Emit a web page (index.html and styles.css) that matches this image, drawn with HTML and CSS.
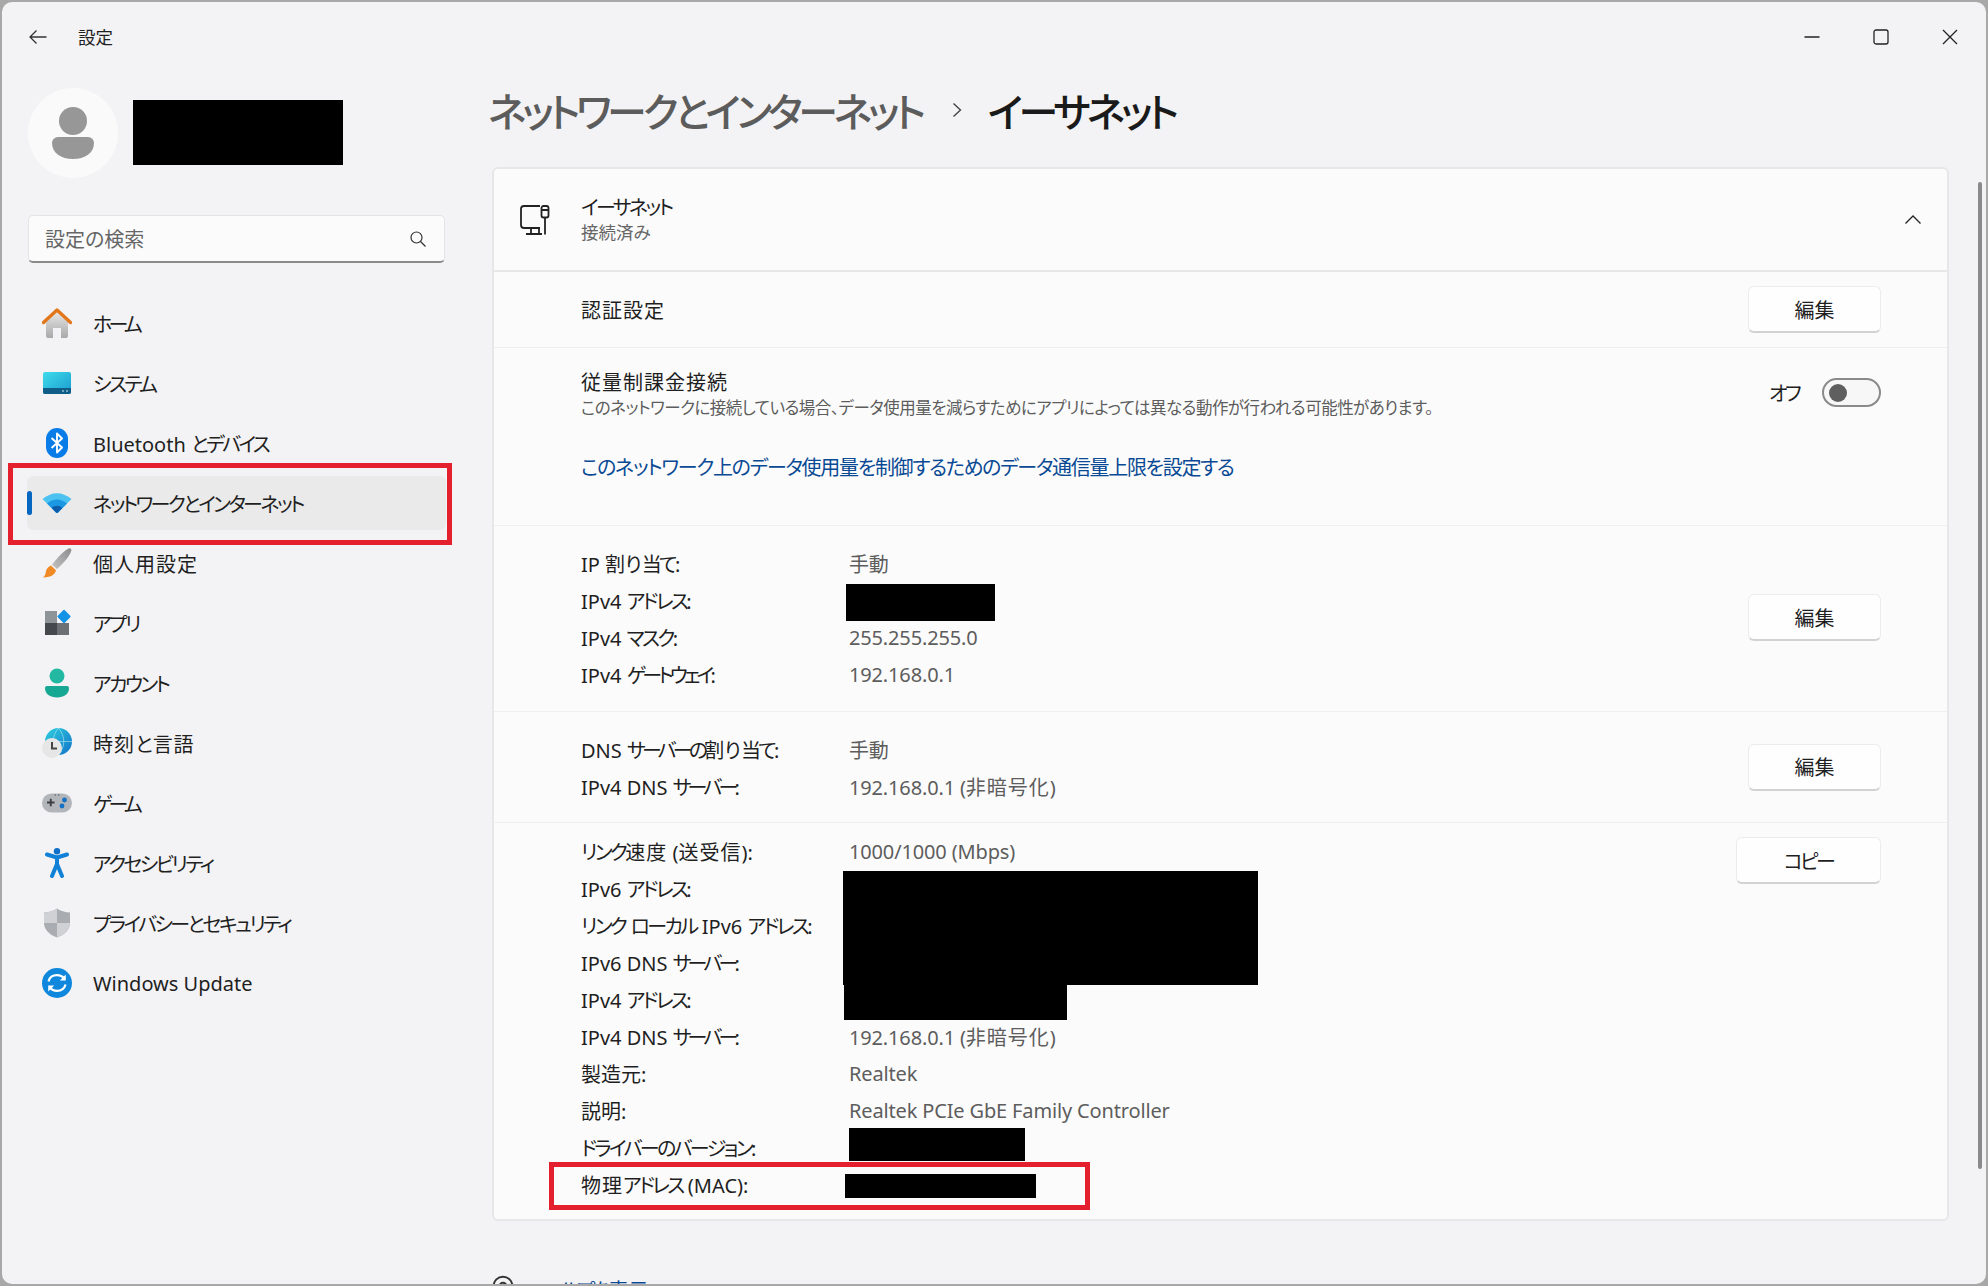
FILE: index.html
```html
<!DOCTYPE html>
<html lang="ja">
<head>
  <meta charset="UTF-8" />
  <meta name="viewport" content="width=device-width, initial-scale=1.0" />
  <title>設定</title>
  <link rel="stylesheet" href="styles.css">
</head>
<body>
  <div class="window">
    <header class="titlebar">
      <svg class="back" viewBox="0 0 18 16"><path d="M17.5 8H1M7.5 1.5 1 8l6.500 6.500" /></svg>
      <span class="app-name">設定</span>
      <div class="win-controls">
        <svg viewBox="0 0 16 16"><path d="M0.500 8h15" /></svg>
        <svg viewBox="0 0 16 16"><rect x="1" y="1" width="14" height="14" rx="2" /></svg>
        <svg viewBox="0 0 16 16"><path d="M1 1l14 14M15 1 1 15" /></svg>
      </div>
    </header>

    <div class="content">
      <aside class="sidebar">
        <div class="profile">
          <div class="avatar">
            <svg viewBox="0 0 90 90"><circle cx="45" cy="33" r="14" /><path d="M24 55a6 6 0 0 1 6-6h30a6 6 0 0 1 6 6c0 10-9 16-21 16s-21-6-21-16z" /></svg>
          </div>
          <div class="profile-name"></div>
        </div>

        <div class="search">
          <span>設定の検索</span>
          <svg viewBox="0 0 16 16"><circle cx="6.500" cy="6.500" r="5.500" /><path d="M10.500 10.500 15.500 15.500" /></svg>
        </div>

        <nav class="nav">
          <a class="nav-item" href="#">
            <svg class="nav-icon" viewBox="0 0 30 30">
              <defs><linearGradient id="home" x1="0" y1="0" x2="0" y2="1"><stop offset="0" stop-color="#e6e6e6" /><stop offset="1" stop-color="#a9a9a9" /></linearGradient></defs>
              <path d="M4 14 15 4l11 10v14a2 2 0 0 1-2 2h-5V20h-8v10H6a2 2 0 0 1-2-2z" fill="url(#home)" />
              <path d="M1.500 14.500 15 2l13.500 12.500" fill="none" stroke="#e2761a" stroke-width="3.400" stroke-linecap="round" stroke-linejoin="round" />
            </svg>
            <span class="kk">ホーム</span>
          </a>
          <a class="nav-item" href="#">
            <svg class="nav-icon" viewBox="0 0 30 30">
              <defs><linearGradient id="sys" x1="0" y1="0" x2="1" y2="1"><stop offset="0" stop-color="#3fdcea" /><stop offset="1" stop-color="#1a9ad0" /></linearGradient></defs>
              <rect x="1" y="4" width="28" height="22" rx="2" fill="url(#sys)" />
              <path d="M1 20h28v4a2 2 0 0 1-2 2H3a2 2 0 0 1-2-2z" fill="#0f5c86" />
              <path d="M20 23h2M24 23h2" stroke="#cfeaf5" stroke-width="1.200" />
            </svg>
            <span class="k">システム</span>
          </a>
          <a class="nav-item" href="#">
            <svg class="nav-icon" viewBox="0 0 30 30">
              <rect x="4" y="0" width="22" height="30" rx="11" fill="#0a7ce8" />
              <path d="M9.500 10 20 19.500 15 24.500V5.500l5 5L9.500 20" fill="none" stroke="#fff" stroke-width="1.900" stroke-linejoin="round" />
            </svg>
            <span>Bluetooth <span class="k">とデバイス</span></span>
          </a>
          <a class="nav-item nav-item-active" href="#">
            <svg class="nav-icon" viewBox="0 0 30 30">
              <path d="M0.500 11Q15-.5 29.500 11L16 24.500a1.500 1.500 0 0 1-2 0z" fill="#4cc2f1" />
              <path d="M5 15.500Q15 7.500 25 15.500L16 24.500a1.500 1.500 0 0 1-2 0z" fill="#1c97e2" />
              <path d="M9.500 19.800Q15 15.500 20.500 19.800L16 24.500a1.500 1.500 0 0 1-2 0z" fill="#0c5cab" />
            </svg>
            <span class="k">ネットワークとインターネット</span>
          </a>
          <a class="nav-item" href="#">
            <svg class="nav-icon" viewBox="0 0 30 30">
              <defs><linearGradient id="brush" x1="1" y1="0" x2="0" y2="1"><stop offset="0" stop-color="#8b8b8b" /><stop offset="1" stop-color="#c4c4c4" /></linearGradient></defs>
              <path d="M26.500.5c2-.8 3.200.4 2.800 2.300C27 10 20 16.500 15 21l-5-4.500C14.500 11 20 4 26.500.5z" fill="url(#brush)" />
              <path d="M9 17.500l5 4.700c-1 4-4 7-13 7.300 2.500-2 2.500-4 3-6.500.5-2.500 2.500-4.500 5-5.500z" fill="#f08a24" />
            </svg>
            <span class="w">個人用設定</span>
          </a>
          <a class="nav-item" href="#">
            <svg class="nav-icon" viewBox="0 0 30 30">
              <rect x="3" y="3" width="12" height="12" fill="#8f9499" />
              <rect x="3" y="15" width="12" height="12" fill="#45494d" />
              <rect x="15" y="15" width="12" height="12" fill="#6c7075" />
              <rect x="17" y="3.500" width="10" height="10" rx="1.200" transform="rotate(45 22 8.500)" fill="#1492e6" />
            </svg>
            <span class="k">アプリ</span>
          </a>
          <a class="nav-item" href="#">
            <svg class="nav-icon" viewBox="0 0 30 30">
              <circle cx="15" cy="8" r="7.500" fill="#22b8a2" />
              <path d="M3 20a2 2 0 0 1 2-2h20a2 2 0 0 1 2 2c0 6-5 9.500-12 9.500S3 26 3 20z" fill="#17a893" />
            </svg>
            <span class="k">アカウント</span>
          </a>
          <a class="nav-item" href="#">
            <svg class="nav-icon" viewBox="0 0 30 30">
              <defs><linearGradient id="globe" x1="0" y1="0" x2="1" y2="1"><stop offset="0" stop-color="#2fd0de" /><stop offset="1" stop-color="#1272c9" /></linearGradient></defs>
              <circle cx="16.500" cy="13.500" r="13.500" fill="url(#globe)" />
              <path d="M3 13.500h27M16.500 0c-7 8-7 19 0 27M16.500 0c7 8 7 19 0 27" fill="none" stroke="#bfeef5" stroke-width=".8" opacity=".7" />
              <circle cx="10" cy="20" r="10" fill="#e6e6e6" />
              <path d="M10 14v6.500h5" fill="none" stroke="#444" stroke-width="2" />
            </svg>
            <span><span class="w">時刻</span>と<span class="w">言語</span></span>
          </a>
          <a class="nav-item" href="#">
            <svg class="nav-icon" viewBox="0 0 30 30">
              <rect x="0" y="5.500" width="30" height="19" rx="9.500" fill="#b2b5ba" />
              <path d="M5 14.500h7.500M8.750 10.800v7.500" stroke="#3d3f42" stroke-width="1.900" />
              <circle cx="22.500" cy="12" r="2.400" fill="#1670c4" />
              <circle cx="20" cy="18" r="2.400" fill="#1670c4" />
              <path d="M12.500 7h1.500M16 7h1.500" stroke="#555" stroke-width="1" />
            </svg>
            <span class="kk">ゲーム</span>
          </a>
          <a class="nav-item" href="#">
            <svg class="nav-icon" viewBox="0 0 30 30">
              <circle cx="15" cy="3.300" r="3.200" fill="#0f6fc6" />
              <path d="M5 6.500 15 9.500l10-3M15 9.500v8M15 16l-5 12M15 16l5 12" fill="none" stroke="#1181d8" stroke-width="4" stroke-linecap="round" stroke-linejoin="round" />
            </svg>
            <span class="k">アクセシビリティ</span>
          </a>
          <a class="nav-item" href="#">
            <svg class="nav-icon" viewBox="0 0 30 30">
              <path d="M15 .5c3.500 2.500 8 3.800 13 4v10c0 7-5 12-13 15C7 26.500 2 21.500 2 14.500v-10C7 4.300 11.500 3 15 .5z" fill="#a9acb0" />
              <path d="M15 .5v14.500H2v-.5v-10C7 4.300 11.500 3 15 .5zM15 15h13c-.5 6.500-5.500 11.500-13 14.500z" fill="#cfd1d4" />
            </svg>
            <span class="k">プライバシーとセキュリティ</span>
          </a>
          <a class="nav-item" href="#">
            <svg class="nav-icon" viewBox="0 0 30 30">
              <circle cx="15" cy="15" r="15" fill="#0f87dc" />
              <path d="M6.500 13.500C7.500 9.500 11 7.200 15 7.200c3 0 5.500 1.200 7 3.300M23.500 16.500c-1 4-4.500 6.300-8.500 6.300-3 0-5.500-1.200-7-3.300" fill="none" stroke="#fff" stroke-width="2.200" />
              <path d="M23.800 6.500v6h-6zM6.200 23.500v-6h6z" fill="#fff" />
            </svg>
            <span>Windows Update</span>
          </a>
        </nav>
      </aside>

      <main class="main">
        <h1 class="page-title">
          <span class="crumb">ネットワークとインターネット</span>
          <svg class="crumb-sep" viewBox="0 0 10 16"><path d="M1.500 1.500 8.500 8l-7 6.500" /></svg>
          <span class="crumb-current">イーサネット</span>
        </h1>

        <section class="card">
          <div class="card-head">
            <svg class="eth-icon" viewBox="0 0 30 30">
              <path d="M20 1H4a3 3 0 0 0-3 3v16a3 3 0 0 0 3 3h16M11 23v6M19 23v6M6 29h16" />
              <rect x="21.500" y="1" width="7" height="11.500" rx="2" />
              <path d="M21.500 5h7M25 12.500V29.500" />
            </svg>
            <div class="head-text">
              <div class="head-title k">イーサネット</div>
              <div class="head-sub">接続済み</div>
            </div>
            <svg class="chevron" viewBox="0 0 16 9"><path d="M.5 8.500 8 1l7.500 7.500" /></svg>
          </div>

          <div class="row row-auth">
            <span class="w">認証設定</span>
            <button class="btn">編集</button>
          </div>

          <div class="row row-metered">
            <div class="metered-text">
              <div class="metered-title w">従量制課金接続</div>
              <div class="metered-desc">このネットワークに接続している場合、データ使用量を減らすためにアプリによっては異なる動作が行われる可能性があります。</div>
              <a class="link" href="#">このネットワーク上のデータ使用量を制御するためのデータ通信量上限を設定する</a>
            </div>
            <div class="toggle-wrap">
              <span class="k">オフ</span>
              <div class="toggle"><div class="knob"></div></div>
            </div>
          </div>

          <div class="row row-ip">
            <dl class="details">
              <dt>IP 割り<span class="k">当て</span>:</dt><dd>手動</dd>
              <dt>IPv4 <span class="k">アドレス</span>:</dt><dd><i class="redact redact-ip"></i></dd>
              <dt>IPv4 <span class="k">マスク</span>:</dt><dd>255.255.255.0</dd>
              <dt>IPv4 <span class="kk">ゲートウェイ</span>:</dt><dd>192.168.0.1</dd>
            </dl>
            <button class="btn">編集</button>
          </div>

          <div class="row row-dns">
            <dl class="details">
              <dt>DNS <span class="kk">サーバーの</span>割り<span class="k">当て</span>:</dt><dd>手動</dd>
              <dt>IPv4 DNS <span class="kk">サーバー</span>:</dt><dd><span>192.168.0.1 (<span class="w">非暗号化</span>)</span></dd>
            </dl>
            <button class="btn">編集</button>
          </div>

          <div class="row row-props">
            <dl class="details">
              <dt><span class="k">リンク</span><span class="w">速度</span> (<span class="w">送受信</span>):</dt><dd>1000/1000 (Mbps)</dd>
              <dt>IPv6 <span class="k">アドレス</span>:</dt><dd><i class="redact redact-v6"></i></dd>
              <dt><span class="k">リンク</span> <span class="k">ローカル</span> IPv6 <span class="k">アドレス</span>:</dt><dd></dd>
              <dt>IPv6 DNS <span class="kk">サーバー</span>:</dt><dd></dd>
              <dt>IPv4 <span class="k">アドレス</span>:</dt><dd><i class="redact redact-v4"></i></dd>
              <dt>IPv4 DNS <span class="kk">サーバー</span>:</dt><dd><span>192.168.0.1 (<span class="w">非暗号化</span>)</span></dd>
              <dt>製造元:</dt><dd>Realtek</dd>
              <dt>説明:</dt><dd>Realtek PCIe GbE Family Controller</dd>
              <dt><span class="k">ドライバーのバージョン</span>:</dt><dd><i class="redact redact-driver"></i></dd>
              <dt class="mac-label"><span class="w">物理</span><span class="k">アドレス</span>&nbsp;(MAC):</dt><dd><i class="redact redact-mac"></i></dd>
            </dl>
            <button class="btn btn-copy"><span class="k">コピー</span></button>
          </div>
        </section>

        <div class="help">
          <svg viewBox="0 0 20 20"><circle cx="10" cy="10" r="8.500" /><circle cx="10" cy="10" r="3" /></svg>
          <a href="#"><span class="k">ヘルプを</span>表示</a>
        </div>
      </main>
    </div>

    <div class="scrollbar"></div>
  </div>
</body>
</html>
```

FILE: styles.css
```css
* {
  margin: 0;
  padding: 0;
  box-sizing: border-box;
}

body {
  width: 1988px;
  height: 1286px;
  overflow: hidden;
  background: #a8a8a8;
  font-family: "Noto Sans", "Noto Sans CJK JP", sans-serif;
  font-feature-settings: "palt";
  font-size: 20px;
  color: #1f1f1f;
}

/* kana runs are tighter than Noto's, kanji a touch wider */
.k {
  letter-spacing: -0.13em;
}

.kk {
  letter-spacing: -0.19em;
}

.w {
  letter-spacing: 0.05em;
}

.window {
  position: relative;
  width: 1988px;
  height: 1286px;
  display: flex;
  flex-direction: column;
  overflow: hidden;
  background: #f3f3f5;
  border: 2px solid #a8a8a8;
  border-radius: 12px;
}

.titlebar {
  height: 70px;
  flex-shrink: 0;
  display: flex;
  align-items: center;
  padding: 0 28px 0 27px;
}

.back {
  width: 18px;
  height: 16px;
  fill: none;
  stroke: #333;
  stroke-width: 1.300;
}

.app-name {
  margin: -2px 0 0 31px;
  font-size: 17.500px;
}

.win-controls {
  margin-left: auto;
  display: flex;
  gap: 53px;
}

.win-controls svg {
  width: 16px;
  height: 16px;
  fill: none;
  stroke: #222;
  stroke-width: 1.300;
}

.content {
  flex: 1;
  display: flex;
  min-height: 0;
}

.sidebar {
  width: 490px;
  flex-shrink: 0;
  padding: 16px 0 0 25px;
}

.profile {
  display: flex;
  align-items: center;
  gap: 15px;
  margin-left: 1px;
}

.avatar {
  width: 90px;
  height: 90px;
  border-radius: 50%;
  background: #fafafa;
}

.avatar svg {
  width: 90px;
  height: 90px;
  fill: #979797;
}

.profile-name {
  width: 210px;
  height: 65px;
  margin-bottom: 2px;
  background: #000;
}

.search {
  width: 417px;
  height: 48px;
  margin: 37px 0 0 1px;
  padding: 0 18px 0 16px;
  display: flex;
  align-items: center;
  justify-content: space-between;
  background: #fbfbfb;
  border: 1px solid #e4e4e4;
  border-bottom: 2px solid #8a8a8a;
  border-radius: 5px;
  color: #666;
}

.search svg {
  width: 16px;
  height: 16px;
  fill: none;
  stroke: #333;
  stroke-width: 1.200;
}

.nav {
  margin-top: 33px;
  width: 419px;
  display: flex;
  flex-direction: column;
  gap: 6px;
}

.nav-item {
  position: relative;
  height: 54px;
  display: flex;
  align-items: center;
  gap: 21px;
  padding-left: 15px;
  border-radius: 6px;
  color: #1f1f1f;
  text-decoration: none;
}

.nav-icon {
  width: 30px;
  height: 30px;
  flex-shrink: 0;
}

.nav-item-active {
  background: #eaeaea;
}

.nav-item-active::before {
  content: '';
  position: absolute;
  left: 0;
  top: 15px;
  width: 5px;
  height: 24px;
  border-radius: 3px;
  background: #0667c0;
}

/* red callout from the screenshot */
.nav-item-active::after {
  content: '';
  position: absolute;
  inset: -13px -6px -15px -19px;
  border: 5px solid #e5202e;
}

.main {
  flex: 1;
  min-width: 0;
  padding-right: 37px;
}

.page-title {
  height: 76px;
  margin: 0 0 19px -4px;
  display: flex;
  align-items: center;
  font-size: 40px;
  font-weight: 500;
  letter-spacing: -0.105em;
}

.crumb {
  color: #5c5c5c;
}

.crumb-sep {
  width: 10px;
  height: 16px;
  margin: 0 26px 0 30px;
  fill: none;
  stroke: #444;
  stroke-width: 1.400;
}

.crumb-current {
  color: #1a1a1a;
}

.card {
  height: 1054px;
  background: #fbfbfb;
  border: 2px solid #e7e7e7;
  border-radius: 6px;
}

.card-head {
  height: 101px;
  display: flex;
  align-items: center;
  padding: 0 26px 0 26px;
}

.eth-icon {
  width: 30px;
  height: 30px;
  fill: none;
  stroke: #222;
  stroke-width: 1.800;
}

.head-text {
  margin: -1px 0 0 31px;
}

.head-title {
  line-height: 27px;
}

.head-sub {
  font-size: 17.500px;
  line-height: 23px;
  color: #666;
}

.chevron {
  width: 16px;
  height: 9px;
  margin-left: auto;
  fill: none;
  stroke: #222;
  stroke-width: 1.300;
}

.row {
  display: flex;
  justify-content: space-between;
  align-items: center;
  padding: 0 66px 0 87px;
  border-top: 1px solid #efefef;
}

.row-auth {
  height: 77px;
  border-top: 2px solid #e7e7e7;
}

.row-metered {
  height: 178px;
  align-items: flex-start;
  padding-top: 21px;
}

.metered-title {
  line-height: 28px;
}

.metered-desc {
  margin-top: 1px;
  font-size: 16.500px;
  line-height: 20px;
  letter-spacing: -0.500px;
  color: #5d5d5d;
}

.link {
  display: block;
  margin-top: 36px;
  line-height: 28px;
  letter-spacing: -1.300px;
  color: #0a4a94;
  text-decoration: none;
}

.toggle-wrap {
  display: flex;
  align-items: center;
  gap: 23px;
  margin-top: 9px;
}

.toggle {
  width: 59px;
  height: 29px;
  padding: 0 0 0 5px;
  display: flex;
  align-items: center;
  background: #f7f7f7;
  border: 2px solid #8a8a8a;
  border-radius: 15px;
}

.knob {
  width: 18px;
  height: 18px;
  border-radius: 50%;
  background: #5f5f5f;
}

.btn {
  width: 133px;
  height: 47px;
  background: #fefefe;
  border: 1px solid #ececec;
  border-bottom: 2px solid #d2d2d2;
  border-radius: 6px;
  font: inherit;
  font-feature-settings: inherit;
  color: #1f1f1f;
}

.btn-copy {
  width: 145px;
  align-self: flex-start;
  margin-top: 3.500px;
}

.row-ip {
  height: 186px;
}

.row-ip .btn {
  margin-top: -2px;
}

.row-dns {
  height: 111px;
}

.row-props {
  height: 398px;
  align-items: flex-start;
  padding-top: 10.500px;
}

.row-ip .details {
  margin-top: 1px;
}

.row-dns .details {
  margin-top: 2px;
}

.details {
  display: grid;
  grid-template-columns: 268px auto;
  grid-auto-rows: 37.150px;
  align-items: center;
  justify-content: start;
}

.row-props .details {
  grid-auto-rows: 36.950px;
}

.details dd {
  position: relative;
  color: #5d5d5d;
  letter-spacing: -0.150px;
  align-self: stretch;
  display: flex;
  align-items: center;
}

.mac-label {
  position: relative;
}

/* red callout around the MAC row */
.mac-label::after {
  content: '';
  box-sizing: border-box;
  position: absolute;
  left: -32px;
  top: -8px;
  width: 541px;
  height: 48px;
  border: 5px solid #e5202e;
}

.redact {
  position: absolute;
  background: #000;
}

.redact-ip {
  left: -3px;
  top: 2px;
  width: 149px;
  height: 37px;
}

.redact-v6 {
  left: -6px;
  top: 0.500px;
  width: 415px;
  height: 114px;
}

.redact-v4 {
  left: -5px;
  top: 3.500px;
  width: 223px;
  height: 35px;
}

.redact-driver {
  left: 0;
  top: -1.500px;
  width: 176px;
  height: 33px;
}

.redact-mac {
  left: -4px;
  top: 8.500px;
  width: 191px;
  height: 24px;
}

.help {
  margin-top: 54px;
  display: flex;
  align-items: flex-start;
  gap: 29px;
}

.help svg {
  width: 22px;
  height: 22px;
  fill: none;
  stroke: #333;
  stroke-width: 1.800;
}

.help a {
  color: #0a4a94;
  text-decoration: none;
}

.scrollbar {
  position: absolute;
  right: 4px;
  top: 180px;
  width: 4px;
  height: 987px;
  border-radius: 2px;
  background: #8a8a8a;
}
```
